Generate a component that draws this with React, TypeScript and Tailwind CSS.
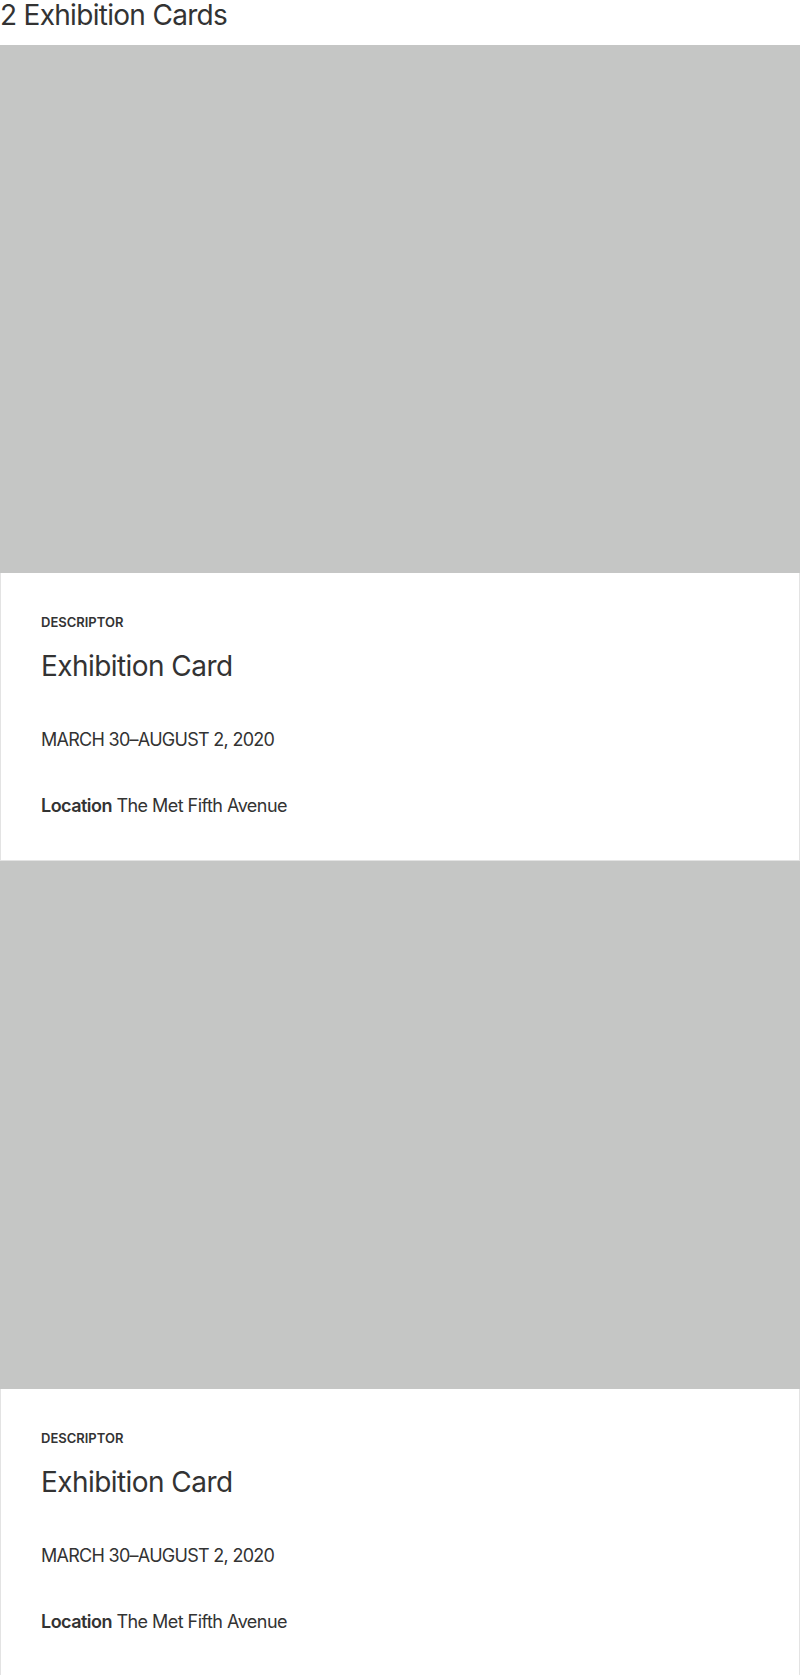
import React from "react";

interface ExhibitionCardProps {
  descriptor: string;
  title: string;
  dates: string;
  location: string;
}

function ExhibitionCard({ descriptor, title, dates, location }: ExhibitionCardProps) {
  return (
    <div className="flex flex-col">
      <div className="h-[528px] w-full bg-[#c5c6c5]" />
      <div className="flex flex-col border border-t-0 border-[#e3e3e3] px-10 pt-[39px] pb-[40px] text-[#333]">
        <p className="text-[13px] leading-5 font-semibold uppercase">{descriptor}</p>
        <h3 className="mt-[16px] text-[28px] leading-9 font-normal tracking-[-0.02em]">{title}</h3>
        <p className="mt-[42px] text-[18px] leading-7 uppercase tracking-[-0.04em]">{dates}</p>
        <p className="mt-[38px] text-[18px] leading-7 tracking-[-0.03em]">
          <span className="font-semibold">Location</span> {location}
        </p>
      </div>
    </div>
  );
}

export default function App() {
  const cards = [1, 2];

  return (
    <div className="w-[800px] bg-white font-['Inter',sans-serif] text-[#333]">
      <h2 className="h-[45px] text-[28px] leading-[30px] font-normal tracking-[-0.025em]">2 Exhibition Cards</h2>
      {cards.map((n) => (
        <ExhibitionCard
          key={n}
          descriptor="Descriptor"
          title="Exhibition Card"
          dates="March 30–August 2, 2020"
          location="The Met Fifth Avenue"
        />
      ))}
    </div>
  );
}
